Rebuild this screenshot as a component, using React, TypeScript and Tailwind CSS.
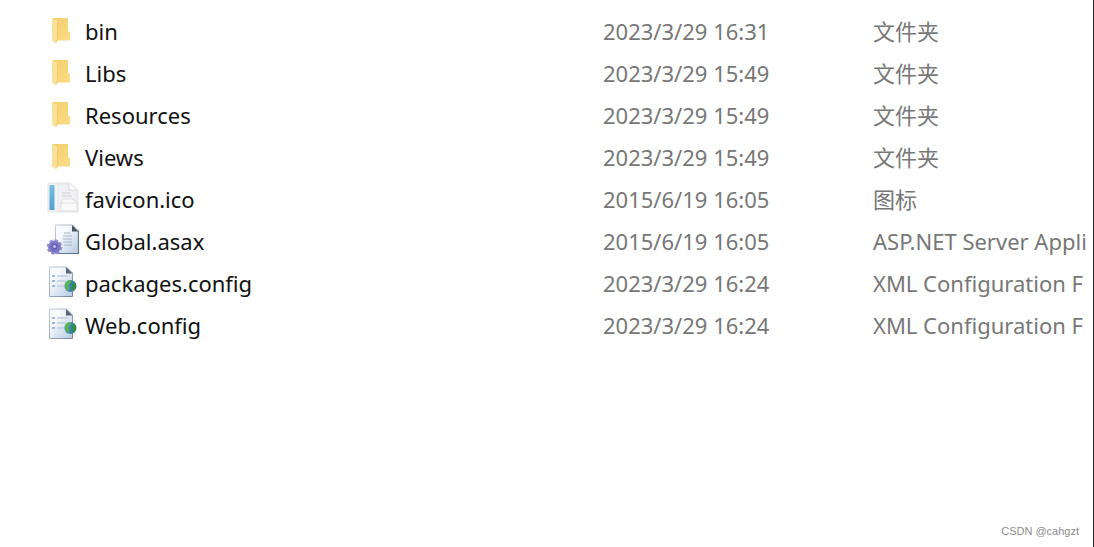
type IconKind = "folder" | "ico" | "asax" | "config";

interface FileEntry {
  name: string;
  modified: string;
  type: string;
  icon: IconKind;
}

const files: FileEntry[] = [
  { name: "bin", modified: "2023/3/29 16:31", type: "文件夹", icon: "folder" },
  { name: "Libs", modified: "2023/3/29 15:49", type: "文件夹", icon: "folder" },
  { name: "Resources", modified: "2023/3/29 15:49", type: "文件夹", icon: "folder" },
  { name: "Views", modified: "2023/3/29 15:49", type: "文件夹", icon: "folder" },
  { name: "favicon.ico", modified: "2015/6/19 16:05", type: "图标", icon: "ico" },
  { name: "Global.asax", modified: "2015/6/19 16:05", type: "ASP.NET Server Appli", icon: "asax" },
  { name: "packages.config", modified: "2023/3/29 16:24", type: "XML Configuration F", icon: "config" },
  { name: "Web.config", modified: "2023/3/29 16:24", type: "XML Configuration F", icon: "config" },
];

/** Gradients shared by all the icons in the list. */
function IconDefs() {
  return (
    <svg className="absolute size-0" aria-hidden="true">
      <defs>
        <linearGradient id="folder-fill" x1="0" y1="0" x2="1" y2="1">
          <stop offset="0" stopColor="#f3cf6c" />
          <stop offset="1" stopColor="#fbdc86" />
        </linearGradient>
        <linearGradient id="page-fill" x1="0" y1="0" x2="1" y2="1">
          <stop offset="0.3" stopColor="#f8fafd" />
          <stop offset="1" stopColor="#b4c9e2" />
        </linearGradient>
        <linearGradient id="page-edge" x1="0" y1="0" x2="1" y2="1">
          <stop offset="0" stopColor="#c3cddb" />
          <stop offset="1" stopColor="#71859c" />
        </linearGradient>
        <linearGradient id="blue-bar" x1="0" y1="0" x2="0" y2="1">
          <stop offset="0" stopColor="#79bfe6" />
          <stop offset="1" stopColor="#4d9fd3" />
        </linearGradient>
        <radialGradient id="gear-fill">
          <stop offset="0.2" stopColor="#6660b8" />
          <stop offset="1" stopColor="#8883cc" />
        </radialGradient>
      </defs>
    </svg>
  );
}

function FolderIcon() {
  return (
    <>
      <path d="M6 4h15v13l2 1.500v8H6z" fill="url(#folder-fill)" />
      <path d="M5 4.500 10.500 7v20l-1.500 2.500-4-3z" fill="#fbe09a" />
      <path d="M10.500 8v16l-1 4" fill="none" stroke="#edc765" strokeWidth="0.800" />
    </>
  );
}

function IcoIcon() {
  return (
    <>
      <path d="M1 1h22l8 7v22H1z" fill="#f4f4f5" stroke="#e2e3e6" />
      <rect x="2.500" y="3" width="5" height="25" fill="url(#blue-bar)" />
      <path d="M11 2h11l8 6v21H11z" fill="#f1f1f3" stroke="#e6e7ea" />
      <path d="M22 2v6h8" fill="#fff" stroke="#d6d8dc" />
      <path d="M15 11h9M15 14h10" stroke="#d8dade" strokeWidth="1.500" />
      <path d="M14 20l2-3h9l5 3v9H14z" fill="#fafafa" stroke="#dcdde1" />
      <path d="M14 21h16" stroke="#dfe0e3" />
    </>
  );
}

function AsaxIcon() {
  return (
    <>
      <path d="M8.500 1h17l6 6v22.500h-23z" fill="url(#page-fill)" stroke="url(#page-edge)" />
      <path d="M31.500 7v22.500H11" fill="none" stroke="#5d7690" strokeWidth="1.200" />
      <path d="M25 1v6.500h6.500z" fill="#46586c" />
      <path d="M17 9h6M16 12h9M16 15h9M16 18h9M17 21h8" stroke="#a9b4c3" strokeWidth="1.200" />
      <circle cx="7.500" cy="23" r="6.600" fill="none" stroke="#9a96d6" strokeWidth="2.400" strokeDasharray="3.200 1.980" />
      <circle cx="7.500" cy="23" r="6.500" fill="url(#gear-fill)" />
      <circle cx="7.500" cy="22.500" r="2" fill="#c9c7ee" stroke="#5a54ac" />
    </>
  );
}

function ConfigIcon() {
  return (
    <>
      <path d="M2.500 1h17l6 6v23.500h-23z" fill="url(#page-fill)" stroke="url(#page-edge)" />
      <path d="M19 1v6.500h6.500z" fill="#53667b" />
      <path d="M10 10h11M10 15h9M10 20h8" stroke="#c3cddb" strokeWidth="1.400" />
      <path d="M5 10h3M5 15h3M5 20h3" stroke="#9bb8f2" strokeWidth="2" />
      <circle cx="23.500" cy="20" r="6" fill="#3f7fb4" />
      <path d="M18 18c1-3 4-4.500 6.500-4l-1 3-2 2 1 3-1 3c-2-1-4-4-3.500-7z" fill="#55b64f" />
      <path d="M25.500 16l3 1c1.500 3 .5 6-2 8l-2-2 .5-3z" fill="#2f8f45" />
    </>
  );
}

const icons: Record<IconKind, () => React.ReactNode> = {
  folder: FolderIcon,
  ico: IcoIcon,
  asax: AsaxIcon,
  config: ConfigIcon,
};

function FileIcon({ kind }: { kind: IconKind }) {
  const Drawing = icons[kind];
  return (
    <svg viewBox="0 -1 32 36" className="h-9 w-8 shrink-0" aria-hidden="true">
      <Drawing />
    </svg>
  );
}

export default function App() {
  return (
    <div className="flex min-h-screen flex-col overflow-hidden border-r border-[#25252b] bg-white font-['Noto_Sans','Noto_Sans_CJK_SC',sans-serif]">
      <IconDefs />
      <main className="flex-1 overflow-hidden pt-2.5 pl-[47px]">
        <table className="w-full table-fixed text-[22px] leading-6 whitespace-nowrap" aria-label="文件列表">
          <colgroup>
            <col className="w-[556px]" />
            <col className="w-[270px]" />
            <col />
          </colgroup>
          <tbody>
            {files.map((file) => (
              <tr key={file.name} className="h-[42px] text-[#777]">
                <td className="p-0 text-[#111]">
                  <div className="flex items-center gap-1.5">
                    <FileIcon kind={file.icon} />
                    <span>{file.name}</span>
                  </div>
                </td>
                <td className="p-0">{file.modified}</td>
                <td className="overflow-hidden p-0">{file.type}</td>
              </tr>
            ))}
          </tbody>
        </table>
      </main>
      <footer className="flex justify-end pr-3.5 pb-2 font-['Liberation_Sans',sans-serif] text-[11px] leading-4 text-[#8c8c8c]">
        CSDN @cahgzt
      </footer>
    </div>
  );
}
